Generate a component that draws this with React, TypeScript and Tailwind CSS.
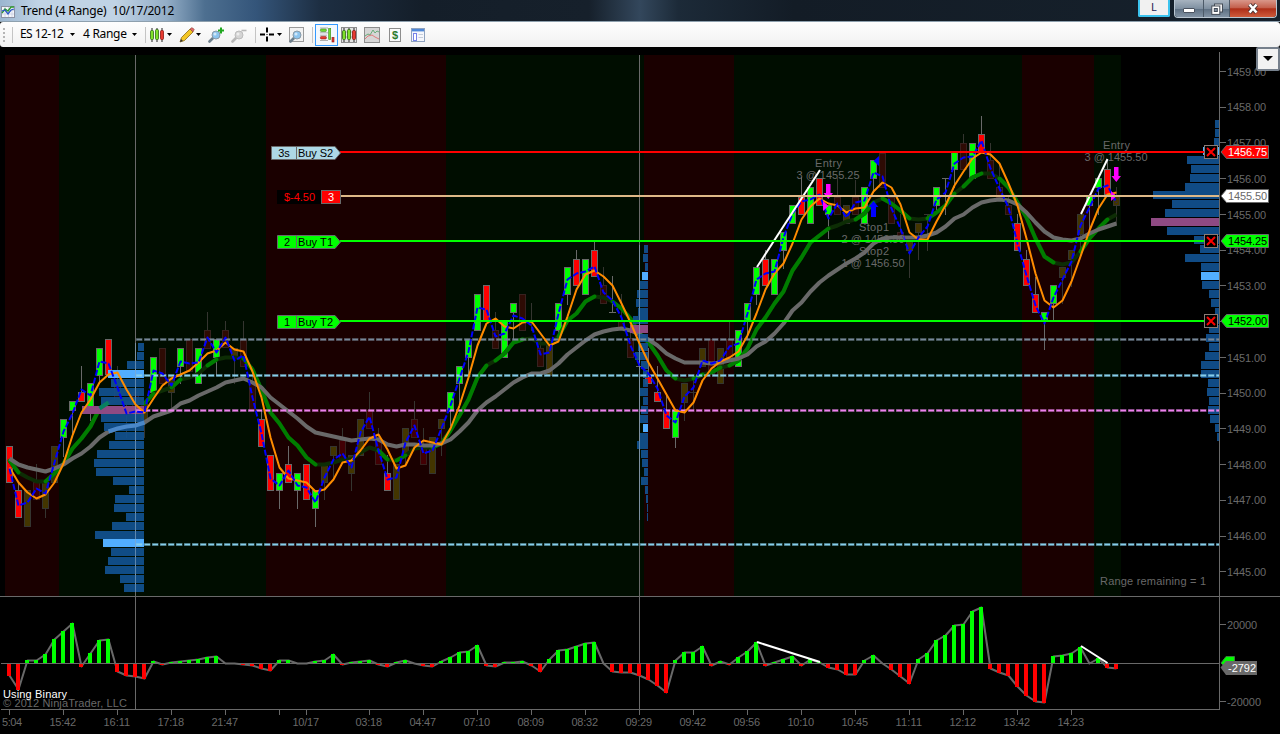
import type { ReactNode } from "react"

type Kind = "g" | "r" | "o" | "m" | "d" | "t" | "b"
// kind, high, top, bottom, low
type Candle = [Kind, number, number, number, number]

const STEP = 9
const barX = (i: number) => 9.5 + i * STEP

const candles: Candle[] = [
  ["r", 446, 446, 482, 482], ["r", 482, 490, 517, 517], ["o", 490, 490, 526, 526], ["m", 464, 482, 499, 499],
  ["o", 482, 482, 508, 517], ["o", 446, 446, 482, 482], ["g", 419, 419, 437, 456], ["g", 401, 401, 410, 433],
  ["r", 366, 392, 401, 401], ["g", 383, 383, 406, 420], ["g", 348, 348, 375, 383], ["r", 339, 339, 374, 374],
  ["m", 366, 383, 401, 401], ["d", 401, 410, 410, 437], ["m", 383, 392, 410, 410], ["o", 402, 402, 419, 437],
  ["g", 357, 357, 392, 392], ["m", 348, 348, 383, 383], ["o", 375, 375, 392, 410], ["g", 348, 348, 366, 383],
  ["m", 339, 339, 371, 371], ["g", 348, 348, 383, 383], ["m", 312, 330, 348, 348], ["g", 339, 339, 357, 375],
  ["m", 321, 330, 347, 347], ["o", 348, 348, 357, 383], ["m", 321, 339, 366, 366], ["m", 366, 381, 410, 410],
  ["r", 410, 419, 446, 446], ["r", 455, 455, 490, 490], ["g", 473, 473, 490, 508], ["r", 446, 464, 482, 482],
  ["g", 473, 473, 490, 508], ["r", 464, 464, 499, 499], ["g", 490, 490, 508, 526], ["o", 464, 464, 482, 499],
  ["o", 446, 446, 455, 480], ["m", 428, 440, 459, 459], ["o", 455, 455, 473, 490], ["o", 419, 419, 455, 455],
  ["m", 392, 410, 428, 428], ["m", 428, 440, 464, 464], ["r", 455, 473, 490, 490], ["o", 464, 464, 499, 499],
  ["o", 428, 428, 455, 464], ["m", 401, 419, 437, 437], ["m", 428, 446, 464, 464], ["o", 437, 437, 473, 473],
  ["o", 419, 419, 428, 455], ["g", 392, 392, 410, 433], ["g", 366, 366, 383, 407], ["g", 339, 339, 357, 375],
  ["g", 294, 294, 330, 330], ["r", 285, 285, 320, 320], ["m", 312, 330, 348, 348], ["g", 320, 320, 357, 357],
  ["g", 303, 303, 312, 338], ["m", 294, 294, 330, 330], ["d", 303, 321, 321, 330], ["m", 339, 348, 366, 366],
  ["o", 340, 340, 375, 375], ["g", 303, 303, 330, 340], ["g", 267, 267, 294, 304], ["r", 250, 259, 285, 285],
  ["g", 259, 259, 294, 294], ["r", 242, 250, 276, 276], ["m", 267, 285, 303, 303], ["b", 276, 312, 312, 312],
  ["m", 294, 320, 328, 328], ["m", 330, 338, 357, 357], ["b", 348, 366, 366, 366], ["r", 348, 376, 383, 383],
  ["r", 366, 392, 401, 401], ["r", 393, 410, 428, 428], ["g", 410, 410, 437, 447], ["o", 383, 383, 402, 420],
  ["d", 375, 392, 392, 410], ["o", 348, 348, 366, 366], ["m", 339, 339, 374, 374], ["o", 348, 348, 383, 383],
  ["m", 322, 339, 358, 358], ["g", 330, 330, 366, 366], ["g", 303, 303, 320, 339], ["g", 267, 267, 294, 304],
  ["r", 250, 259, 285, 285], ["g", 259, 259, 294, 294], ["g", 232, 232, 250, 268], ["g", 205, 205, 223, 223],
  ["r", 177, 197, 214, 214], ["g", 187, 187, 223, 223], ["r", 178, 178, 205, 205], ["g", 205, 205, 214, 238],
  ["m", 178, 197, 214, 214], ["o", 205, 205, 223, 223], ["m", 180, 197, 214, 214], ["g", 187, 187, 223, 223],
  ["g", 160, 160, 178, 191], ["m", 153, 153, 187, 187], ["m", 197, 197, 223, 223], ["m", 214, 232, 240, 240],
  ["o", 240, 240, 250, 277], ["o", 223, 223, 232, 259], ["d", 214, 214, 214, 250], ["g", 187, 187, 205, 214],
  ["t", 178, 178, 178, 214], ["g", 152, 152, 169, 187], ["m", 134, 143, 169, 169], ["g", 143, 143, 178, 178],
  ["r", 116, 134, 152, 152], ["m", 143, 160, 178, 178], ["m", 165, 187, 197, 197], ["m", 196, 205, 214, 214],
  ["r", 214, 223, 250, 250], ["r", 250, 259, 285, 285], ["r", 277, 294, 312, 312], ["g", 312, 312, 320, 349],
  ["g", 285, 285, 303, 320], ["o", 267, 267, 277, 303], ["o", 250, 250, 259, 286], ["o", 214, 214, 234, 250],
  ["g", 196, 196, 205, 230], ["g", 178, 178, 187, 214], ["r", 160, 169, 194, 194], ["o", 187, 196, 205, 223],
]

const fastLine = [
  467, 482, 492, 498, 494, 482, 463, 435, 412, 399, 382, 374, 372, 389, 404, 412, 398, 385, 378, 374, 370, 362, 353,
  350, 342, 349, 351, 371, 397, 437, 467, 478, 480, 482, 491, 489, 479, 462, 460, 450, 438, 434, 449, 468, 465, 447,
  440, 442, 444, 428, 405, 377, 345, 323, 318, 326, 328, 322, 321, 333, 345, 341, 316, 289, 274, 270, 276, 285, 303,
  322, 343, 362, 378, 394, 410, 412, 402, 380, 368, 361, 357, 351, 335, 313, 289, 273, 263, 243, 219, 206, 198, 203,
  205, 212, 208, 207, 191, 182, 187, 204, 232, 239, 239, 221, 205, 185, 171, 158, 152, 154, 163, 183, 205, 238, 273,
  300, 307, 300, 281, 256, 230, 208, 194, 192,
]

const priceLine = [
  468, 505, 502, 488, 493, 462, 431, 413, 389, 395, 361, 363, 387, 413, 411, 412, 370, 373, 385, 361, 363, 362, 337,
  352, 337, 360, 355, 397, 433, 478, 485, 470, 485, 487, 502, 477, 459, 453, 467, 432, 416, 450, 479, 477, 442, 425,
  453, 450, 428, 405, 378, 351, 307, 309, 336, 333, 315, 318, 325, 354, 352, 313, 279, 273, 271, 266, 292, 300, 317,
  345, 365, 373, 388, 415, 422, 396, 387, 360, 363, 360, 346, 343, 313, 279, 273, 271, 237, 213, 201, 199, 194, 218,
  203, 217, 202, 200, 172, 176, 208, 228, 253, 237, 226, 199, 192, 163, 157, 156, 140, 168, 188, 207, 243, 275, 305,
  323, 297, 279, 261, 225, 207, 188, 185, 202,
]

const trendLine = [
  460, 472, 477, 481, 481, 473, 463, 448, 438, 426, 408, 402, 400, 402, 403, 403, 393, 390, 387, 379, 377, 373, 365,
  359, 357, 357, 358, 369, 389, 412, 423, 437, 445, 457, 464, 464, 462, 459, 459, 452, 447, 450, 459, 460, 455, 448,
  447, 447, 443, 430, 415, 399, 377, 365, 360, 353, 342, 339, 338, 343, 343, 336, 320, 313, 301, 296, 297, 301, 308,
  318, 333, 342, 355, 370, 378, 380, 378, 374, 372, 367, 365, 360, 348, 329, 317, 303, 291, 270, 257, 242, 235, 228,
  225, 221, 219, 213, 202, 198, 203, 210, 218, 219, 218, 212, 205, 193, 186, 177, 173, 173, 178, 187, 202, 217, 238,
  256, 262, 264, 262, 251, 238, 228, 219, 214,
]

const trendBright: [number, number][] = [
  [0, 1], [4, 11], [15, 16], [18, 19], [22, 23], [26, 34], [41, 42], [43, 44], [47, 53], [54, 57], [61, 65], [67, 74],
  [76, 77], [78, 79], [80, 91], [94, 96], [97, 100], [102, 105], [106, 108], [110, 116], [119, 122],
]

const slowLine = [
  458, 464, 467, 469, 471, 468, 464, 458, 453, 446, 437, 431, 428, 426, 425, 422, 416, 413, 410, 403, 400, 395, 391,
  387, 382, 380, 378, 382, 387, 397, 404, 411, 418, 426, 432, 434, 436, 438, 440, 439, 438, 439, 444, 446, 444, 444,
  445, 445, 443, 439, 431, 422, 410, 402, 396, 389, 382, 377, 373, 373, 370, 363, 354, 347, 340, 334, 331, 329, 328,
  330, 334, 339, 345, 353, 358, 362, 362, 362, 363, 362, 360, 358, 354, 346, 341, 333, 323, 310, 302, 291, 282, 275,
  269, 263, 258, 252, 243, 238, 237, 237, 237, 237, 235, 232, 226, 218, 214, 207, 202, 200, 199, 200, 204, 212, 222,
  231, 237, 239, 240, 238, 233, 229, 226, 223,
]

const deltas = [
  -12, -26, 3, 3, 9, 24, 32, 40, -3, 10, 23, 24, -8, -12, -13, -15, 2, -1, 1, 2, 3, 4, 6, 7, 0, 0, -1, -2, -5, -7, 3,
  3, 0, 0, 2, 3, 9, -1, 1, 2, 3, -1, -3, 1, 3, 0, -2, -3, 2, 6, 11, 12, 18, -2, -3, 1, 1, 2, -2, -8, 4, 13, 14, 17,
  20, 21, 0, -8, -9, -9, -12, -16, -22, -29, 3, 11, 11, 17, -2, 2, -1, 6, 12, 21, -2, 1, 4, 7, -2, 4, 1, -4, -6, -11,
  -11, 3, 8, 0, -6, -13, -20, 4, 10, 23, 28, 38, 39, 52, 56, -5, -9, -12, -23, -32, -38, -39, 7, 8, 10, 16, 0, 5, -4,
  -5,
]

const bands = [
  { x: 5, w: 54, up: false }, { x: 59, w: 207, up: true }, { x: 266, w: 180, up: false }, { x: 446, w: 198, up: true },
  { x: 644, w: 90, up: false }, { x: 734, w: 288, up: true }, { x: 1022, w: 72, up: false }, { x: 1094, w: 27, up: true },
]

interface ProfileData {
  right: number
  top: number
  lefts: number[]
  poc: number
  bright: number[]
}

const profiles: ProfileData[] = [
  {
    right: 144, top: 343, poc: 7, bright: [3, 22],
    lefts: [138, 137, 127, 108, 111, 99, 101, 82, 101, 104, 115, 109, 97, 94, 96, 113, 129, 115, 114, 126, 112, 95, 103, 111, 108, 105, 120, 124],
  },
  {
    right: 648, top: 245, poc: 9, bright: [3, 20],
    lefts: [644, 643, 645, 642, 640, 637, 636, 638, 633, 630, 638, 638, 635, 641, 643, 643, 640, 643, 641, 640, 643, 640, 637, 641, 642, 644, 641, 645, 646, 647, 647],
  },
  {
    right: 1219, top: 120, poc: 11, bright: [3, 17],
    lefts: [1215, 1215, 1214, 1203, 1187, 1191, 1190, 1185, 1153, 1172, 1165, 1151, 1167, 1194, 1200, 1185, 1201, 1201, 1202, 1209, 1211, 1215, 1212, 1209, 1206, 1209, 1205, 1201, 1201, 1208, 1207, 1209, 1208, 1210, 1215, 1217],
  },
]

const times: [number, string][] = [
  [63, "15:42"], [117, "16:11"], [171, "17:18"], [225, "21:47"], [306, "10/17"], [369, "03:18"], [423, "04:47"],
  [477, "07:10"], [531, "08:09"], [585, "08:32"], [639, "09:29"], [693, "09:42"], [747, "09:56"], [801, "10:10"],
  [855, "10:45"], [909, "11:11"], [963, "12:12"], [1017, "13:42"], [1071, "14:23"],
]

const points = (ys: number[], from = 0, to = ys.length - 1) =>
  ys.slice(from, to + 1).map((y, i) => `${barX(from + i)},${y + 0.5}`).join(" ")

const bandUp = (x: number) => bands.some((b) => b.up && x >= b.x && x < b.x + b.w)

function CandleMark({ i, c }: { i: number; c: Candle }) {
  const [kind, hi, top, bottom, lo] = c
  const x = barX(i)
  const dim = kind === "o" || kind === "m" || kind === "d"
  const wick = dim ? "#353530" : "#696969"
  const fill =
    kind === "g" ? "#00ff00" : kind === "r" ? "#ff0000" : kind === "o" ? "#433500" : bandUp(x) ? "#2e0b04" : "#420004"
  return (
    <g shapeRendering="crispEdges">
      {hi < lo && <line x1={x} x2={x} y1={hi} y2={lo + 1} stroke={wick} />}
      {bottom - top > 2 ? (
        <rect x={x - 3} y={top + 0.5} width={6} height={bottom - top} fill={fill} stroke={kind === "m" ? "#37211f" : wick} />
      ) : (
        <line x1={x - 3.5} x2={x + 3.5} y1={top + 0.5} y2={top + 0.5} stroke={wick} />
      )}
    </g>
  )
}

function Profile({ p }: { p: ProfileData }) {
  return (
    <g shapeRendering="crispEdges">
      {p.lefts.map((l, i) => {
        const color = i === p.poc ? "#8f4a83" : p.bright.includes(i) ? "#52aeff" : "#115190"
        return (
          <rect key={i} x={l} y={Math.round(p.top + i * 8.93)} width={p.right - l} height={8} fill={color} fillOpacity={color === "#115190" ? 0.92 : 1} />
        )
      })}
    </g>
  )
}

function DashedLevel({ y, color }: { y: number; color: string }) {
  return (
    <g strokeDasharray="6.5 1.5">
      <line x1={136} x2={1219} y1={y} y2={y} stroke={color} strokeWidth={3} opacity={0.45} />
      <line x1={136.5} x2={1219} y1={y} y2={y} stroke={color} strokeWidth={1.3} strokeDasharray="5.5 2.5" />
    </g>
  )
}

function OrderTag({ x, y, qty, label, fill }: { x: number; y: number; qty: string; label: string; fill: string }) {
  return (
    <g>
      <path d={`M${x + 0.5} ${y - 5.5}H335L340.5 ${y + 1}L335 ${y + 7.5}H${x + 0.5}Z`} fill={fill} stroke="#696969" />
      <line x1={296.5} x2={296.5} y1={y - 5} y2={y + 7} stroke="#696969" />
      <text x={(x + 297) / 2} y={y + 5} textAnchor="middle" fill="#000">{qty}</text>
      <text x={298} y={y + 5} fill="#000" textLength={35}>{label}</text>
    </g>
  )
}

function PriceTag({ y, fill, color, label }: { y: number; fill: string; color: string; label: string }) {
  return (
    <g>
      <path d={`M1221 ${y}L1226.5 ${y - 6.5}H1268.5V${y + 6.5}H1226.5Z`} fill={fill} stroke="#696969" />
      <text x={1228} y={y + 4} fill={color} textLength={39}>{label}</text>
    </g>
  )
}

function CloseBox({ y }: { y: number }) {
  return (
    <g>
      <rect x={1204.5} y={y - 6.5} width={13} height={13} fill="#000" stroke="#8a7a75" />
      <path d={`M1207 ${y - 4}l8 8M1215 ${y - 4}l-8 8`} stroke="#ff0000" strokeWidth={2} />
    </g>
  )
}

function ArrowDown({ x, y }: { x: number; y: number }) {
  return <path d={`M${x - 2} ${y}h4.5v9h2.5l-4.7 6l-4.8 -6h2.5z`} fill="#ff00ff" />
}

function Chart() {
  return (
    <svg className="block" width={1280} height={687} viewBox="0 47 1280 687" fontFamily="'Liberation Sans', Arial, sans-serif" fontSize={11}>
      <rect x={0} y={47} width={1280} height={687} fill="#000" />
      {bands.map((b) => (
        <rect key={b.x} x={b.x} y={55} width={b.w} height={541} fill={b.up ? "#000d00" : "#1a0000"} />
      ))}

      {/* frame and axes */}
      <g stroke="#696969" shapeRendering="crispEdges">
        <line x1={0} x2={1280} y1={596.5} y2={596.5} />
        <line x1={1} x2={1220} y1={709.5} y2={709.5} />
        <line x1={1219.5} x2={1219.5} y1={52} y2={710} />
        {[9, 279, ...times.map(([x]) => x)].map((x) => (
          <line key={x} x1={x + 0.5} x2={x + 0.5} y1={710} y2={715} />
        ))}
        {Array.from({ length: 15 }, (_, k) => (
          <line key={k} x1={1220} x2={1226} y1={Math.round(71 + k * 35.74) + 0.5} y2={Math.round(71 + k * 35.74) + 0.5} />
        ))}
        <line x1={1220} x2={1226} y1={624.5} y2={624.5} />
        <line x1={1220} x2={1226} y1={701.5} y2={701.5} />
      </g>
      <g fill="#696969">
        <text x={2} y={726} textLength={20}>5:04</text>
        {times.map(([x, t]) => (
          <text key={t} x={x - 13.5} y={726} textLength={26.5}>{t}</text>
        ))}
        {Array.from({ length: 15 }, (_, k) => (
          <text key={k} x={1227} y={Math.round(75.6 + k * 35.74)} textLength={39}>{(1459 - k).toFixed(2)}</text>
        ))}
        <text x={1227} y={629} textLength={30}>20000</text>
        <text x={1227} y={706} textLength={34}>-20000</text>
        <text x={1100} y={585} textLength={106}>Range remaining = 1</text>
      </g>

      {candles.map((c, i) => (
        <CandleMark key={i} i={i} c={c} />
      ))}

      {/* moving averages */}
      <g fill="none" strokeLinejoin="round">
        <polyline points={points(trendLine)} stroke="#0d2d05" strokeWidth={4} />
        {trendBright.map(([a, b]) => (
          <polyline key={a} points={points(trendLine, a, b)} stroke="#007d00" strokeWidth={4} strokeLinecap="round" />
        ))}
        <polyline points={points(slowLine)} stroke="#696969" strokeWidth={4} />
      </g>

      <g stroke="#696969" shapeRendering="crispEdges">
        <line x1={135.5} x2={135.5} y1={55} y2={709} />
        <line x1={639.5} x2={639.5} y1={55} y2={709} />
      </g>
      {profiles.map((p) => (
        <Profile key={p.right} p={p} />
      ))}
      <g stroke="#8aa9c4" opacity={0.6} shapeRendering="crispEdges">
        <line x1={135.5} x2={135.5} y1={343} y2={592} />
        <line x1={639.5} x2={639.5} y1={245} y2={520} />
      </g>
      <polyline points={points(slowLine, 11, 15)} fill="none" stroke="#4a87c8" strokeWidth={4} />
      <polyline points={points(trendLine, 10, 11)} fill="none" stroke="#088060" strokeWidth={4} />

      <DashedLevel y={339.5} color="#778899" />
      <DashedLevel y={375.5} color="#87ceeb" />
      <DashedLevel y={410.5} color="#ee82ee" />
      <DashedLevel y={544.5} color="#87ceeb" />

      <g fill="none" strokeLinejoin="round">
        <polyline points={points(fastLine)} stroke="#ff8c00" strokeWidth={2} />
        <polyline points={points(priceLine)} stroke="#0000ff" strokeWidth={2} strokeDasharray="6 2" />
      </g>

      {/* executions */}
      <g fill="#696969">
        <text x={815} y={167} textLength={27}>Entry</text>
        <text x={796.5} y={179} textLength={63}>3 @ 1455.25</text>
        <text x={859} y={231} textLength={30}>Stop1</text>
        <text x={841.5} y={243} textLength={63}>2 @ 1456.50</text>
        <text x={859} y={255} textLength={30}>Stop2</text>
        <text x={841.5} y={267} textLength={63}>1 @ 1456.50</text>
        <text x={1103} y={149} textLength={27}>Entry</text>
        <text x={1084.5} y={161} textLength={63}>3 @ 1455.50</text>
      </g>
      <g stroke="#fff" strokeWidth={2}>
        <line x1={757} y1={267} x2={820} y2={170} />
        <line x1={1081} y1={214} x2={1107.5} y2={159} />
      </g>
      <ArrowDown x={828} y={184} />
      <ArrowDown x={1116} y={167} />
      <path d="M823 201L828.5 206L823 211Z" fill="#ff00ff" />
      <path d="M1111 191L1116.5 196L1111 201Z" fill="#ff00ff" />
      <path d="M871 217V207H868.5L873.5 201L878.5 207H876V217Z" fill="#0000ff" />
      <path d="M879 156V166L873.5 161Z" fill="#0000ff" />

      {/* working orders */}
      <g strokeWidth={2} shapeRendering="crispEdges">
        <line x1={340} x2={1204} y1={152} y2={152} stroke="#ff0000" />
        <line x1={341} x2={1219} y1={196} y2={196} stroke="#deb887" />
        <line x1={340} x2={1204} y1={241} y2={241} stroke="#00ff00" />
        <line x1={340} x2={1204} y1={321} y2={321} stroke="#00ff00" />
      </g>
      <OrderTag x={271} y={152} qty="3s" label="Buy S2" fill="#add8e6" />
      <OrderTag x={277} y={241} qty="2" label="Buy T1" fill="#00ff00" />
      <OrderTag x={277} y={321} qty="1" label="Buy T2" fill="#00ff00" />
      <rect x={277} y={190} width={44} height={14} fill="#000" />
      <text x={284} y={201} fill="#ff0000" textLength={31}>$-4.50</text>
      <rect x={321.5} y={190.5} width={19} height={13} fill="#ff0000" stroke="#696969" />
      <text x={331} y={201} fill="#fff" textAnchor="middle">3</text>
      <CloseBox y={152} />
      <CloseBox y={241} />
      <CloseBox y={321} />
      <PriceTag y={152} fill="#ff0000" color="#fff" label="1456.75" />
      <PriceTag y={196} fill="#fff" color="#696969" label="1455.50" />
      <PriceTag y={241} fill="#00ff00" color="#000" label="1454.25" />
      <PriceTag y={321} fill="#00ff00" color="#000" label="1452.00" />

      {/* delta panel */}
      <polyline
        points={deltas.map((d, i) => `${barX(i)},${663.5 - d}`).join(" ")}
        fill="none"
        stroke="#696969"
        strokeWidth={2}
        strokeLinejoin="round"
      />
      <g shapeRendering="crispEdges">
        {deltas.map((d, i) =>
          d === 0 ? null : (
            <rect key={i} x={7 + i * STEP} y={d > 0 ? 663 - d : 664} width={4} height={Math.abs(d)} fill={d > 0 ? "#00ff00" : "#ff0000"} />
          ),
        )}
        <line x1={1} x2={1220} y1={663.5} y2={663.5} stroke="#696969" />
      </g>
      <g stroke="#fff" strokeWidth={2}>
        <line x1={757} y1={642} x2={820} y2={662} />
        <line x1={1081} y1={646} x2={1107.5} y2={663} />
      </g>
      <path d="M1221 663L1226 656.5H1234.5V668H1226Z" fill="#00ff00" stroke="#3b7a3b" />
      <path d="M1220.5 667.5L1226 661H1257V675H1226Z" fill="#696969" />
      <text x={1228} y={672} fill="#fff" textLength={28}>-2792</text>
      <text x={3} y={707} fill="#696969" textLength={124}>© 2012 NinjaTrader, LLC</text>
      <text x={3} y={698} fill="#fff" textLength={64}>Using Binary</text>
    </svg>
  )
}

function Icon({ className = "", children }: { className?: string; children: ReactNode }) {
  return (
    <svg width={16} height={16} viewBox="0 0 16 16" className={`shrink-0 ${className}`}>
      {children}
    </svg>
  )
}

function Caret({ className = "" }: { className?: string }) {
  return (
    <svg width={5} height={3} viewBox="0 0 5 3" className={`shrink-0 ${className}`}>
      <path d="M0 0H5L2.5 3Z" fill="#000" />
    </svg>
  )
}

function Separator({ className = "" }: { className?: string }) {
  return <div className={`h-4 w-px shrink-0 bg-[#c4c4c4] ${className}`} />
}

function Candlesticks() {
  return (
    <>
      <path d="M3 1V15M8 1V15M13 1V15" stroke="#222" />
      <rect x={1.5} y={3.5} width={3} height={9} rx={1} fill="#7ee02a" stroke="#2e6b12" strokeWidth={0.8} />
      <rect x={6.5} y={2.5} width={3} height={10} rx={1} fill="#7ee02a" stroke="#2e6b12" strokeWidth={0.8} />
      <rect x={11.5} y={3.5} width={3} height={9} rx={1} fill="#e83a30" stroke="#8c1712" strokeWidth={0.8} />
    </>
  )
}

function Magnifier({ muted = false }: { muted?: boolean }) {
  return (
    <>
      <path d="M5.5 10.5L1.5 14.5" stroke={muted ? "#b8b8b8" : "#6d7f8c"} strokeWidth={2.6} strokeLinecap="round" />
      <circle cx={8} cy={8} r={4} fill={muted ? "#d4d4d4" : "#8cc4ee"} stroke={muted ? "#bcbcbc" : "#8a9aa6"} />
      <circle cx={7} cy={7} r={1.5} fill="#fff" opacity={0.6} />
    </>
  )
}

function TitleBar() {
  return (
    <div className="relative flex h-[22px] shrink-0 items-center border-b border-[#8ea0ae] bg-[linear-gradient(90deg,#9bb6d0_0%,#c0d3e5_3%,#c0d3e5_9%,#94aec7_13%,#4d6f90_16%,#34557a_20%,#1d2e42_25%,#141e29_33%,#16202b_46%,#33475c_50%,#1c2a38_53%,#131c26_62%,#16212c_100%)]">
      <Icon className="ml-px">
        <rect x={0.5} y={3.5} width={13} height={11} fill="#f4f6fa" stroke="#8d93a5" />
        <path d="M4 4V14M7.5 4V14M11 4V14M1 7.5H13M1 11H13" stroke="#c3cbe0" strokeWidth={0.7} />
        <path d="M1 10L4 6L7 8L10 4H13" fill="none" stroke="#2b9a2b" strokeWidth={1.3} />
        <path d="M1 8L4 7L7 11L10 7L13 6" fill="none" stroke="#2b57c4" strokeWidth={1.3} />
      </Icon>
      <span className="ml-1 whitespace-pre font-['Noto_Sans',sans-serif] text-[12px] leading-[20px] tracking-[-0.2px] text-black">
        {"Trend (4 Range)  10/17/2012"}
      </span>
      <div className="ml-auto mr-[3px] flex h-full items-start">
        <div className="mr-1 flex h-[17px] w-8 items-center justify-center rounded-b-[2px] border-2 border-t-0 border-[#3cc3ee] bg-[#f1f1f1] pb-px font-['Noto_Sans',sans-serif] text-[11px] text-[#222255]">
          L
        </div>
        <div className="flex h-[18px] overflow-hidden rounded-b-[4px] border border-t-0 border-[#b9c6d1]">
          <div className="flex w-7 items-center justify-center bg-[linear-gradient(#a7b3bf,#7f90a1_50%,#5d6f82_52%,#8293a4)]">
            <div className="mt-1 h-[5px] w-3 rounded-[1px] border border-[#4b5360] bg-white" />
          </div>
          <div className="flex w-[27px] items-center justify-center border-x border-[#4c5a68] bg-[linear-gradient(#a7b3bf,#7f90a1_50%,#5d6f82_52%,#8293a4)]">
            <svg width={12} height={12} viewBox="0 0 12 12">
              <rect x={3.5} y={1} width={8} height={8} fill="#eee" stroke="#444c57" />
              <rect x={0.8} y={3} width={8} height={8.4} fill="#fff" stroke="#444c57" />
              <rect x={3.3} y={5.5} width={3} height={3} fill="#7f90a1" stroke="#444c57" />
            </svg>
          </div>
          <div className="flex w-[46px] items-center justify-center bg-[linear-gradient(#d9978a,#c4604d_45%,#ae2e18_52%,#cf5b3c)]">
            <svg width={12} height={11} viewBox="0 0 12 11">
              <path d="M2.5 1.5L9.5 9.5M9.5 1.5L2.5 9.5" stroke="#4d3535" strokeWidth={4.2} />
              <path d="M2.5 1.5L9.5 9.5M9.5 1.5L2.5 9.5" stroke="#fff" strokeWidth={2.6} />
            </svg>
          </div>
        </div>
      </div>
    </div>
  )
}

function ToolBar() {
  return (
    <div className="flex h-[25px] shrink-0 items-center rounded-[3px] bg-[linear-gradient(#fefefe,#f1f1f1)] font-['Noto_Sans',sans-serif] text-[12px] text-black">
      <svg width={3} height={14} viewBox="0 0 3 14" className="ml-[3px]">
        <path d="M1 0V14" stroke="#b5b5b5" strokeWidth={2} strokeDasharray="2 2" />
      </svg>
      <Separator className="ml-[6px]" />
      <span className="ml-[7px] w-[50px] whitespace-nowrap pb-px text-[12px] tracking-[-0.55px]">ES 12-12</span>
      <Caret />
      <span className="ml-2 w-[49px] whitespace-nowrap pb-px text-[12px] tracking-[-0.3px]">4 Range</span>
      <Caret />
      <Separator className="ml-2" />
      <Icon className="ml-[3px]">
        <Candlesticks />
      </Icon>
      <Caret className="ml-0.5" />
      <Icon className="ml-[7px]">
        <path d="M1 15L2.5 10.5L11 2L14 5L5.5 13.5Z" fill="#f3c625" stroke="#8a6a1d" strokeWidth={0.8} />
        <path d="M11 2L12.5 0.8Q14 0.6 15.2 2.4L14 5Z" fill="#e0686a" stroke="#8a4a3a" strokeWidth={0.6} />
        <path d="M1 15L2 12L4 14Z" fill="#333" />
      </Icon>
      <Caret className="ml-px" />
      <Icon className="ml-[7px]">
        <Magnifier />
        <path d="M13 0.5V6.5M10 3.5H16" stroke="#1fa71f" strokeWidth={2} />
      </Icon>
      <Icon className="ml-[7px]">
        <Magnifier muted />
        <path d="M10.5 3.5H15.5" stroke="#b8b8b8" strokeWidth={1.6} />
      </Icon>
      <Separator className="ml-2" />
      <Icon className="ml-1">
        <path d="M7 0.5V5.5M7 9.5V14.5M0 7.5H5M9 7.5H14" stroke="#000" strokeWidth={2} />
        <path d="M6.5 7.5H7.5" stroke="#000" />
      </Icon>
      <Caret className="ml-px" />
      <Icon className="ml-[7px]">
        <rect x={0.5} y={0.5} width={14} height={14} fill="#f2f2f2" stroke="#9a9a9a" />
        <Magnifier />
      </Icon>
      <Separator className="ml-[7px]" />
      <div className="ml-0.5 flex h-[22px] w-[23px] items-center justify-center border border-[#3399ff] bg-[#f3f8fd]">
        <Icon>
          <path d="M1 1H9M1 5.8H9M1 8.2H8M1 13.5H9" stroke="#9a9a9a" strokeWidth={0.8} />
          <rect x={1.4} y={2} width={6} height={2.6} rx={1} fill="#6fdc35" stroke="#3d8a18" strokeWidth={0.6} />
          <rect x={1.4} y={9.4} width={6} height={2.6} rx={1} fill="#e83a30" stroke="#8c1712" strokeWidth={0.6} />
          <rect x={9.7} y={1.5} width={2} height={11} fill="#6fdc35" stroke="#3d8a18" strokeWidth={0.6} />
          <rect x={13} y={10.5} width={2} height={4.5} fill="#e83a30" stroke="#8c1712" strokeWidth={0.6} />
        </Icon>
      </div>
      <Icon className="ml-[3px]">
        <rect x={0.5} y={0.5} width={15} height={15} fill="#e4e4e4" stroke="#8d8d8d" />
        <path d="M1 5H15M1 10H15" stroke="#aaa" />
        <Candlesticks />
      </Icon>
      <Icon className="ml-[7px]">
        <rect x={0.5} y={0.5} width={15} height={15} fill="#d6d6d6" stroke="#8d8d8d" />
        <path d="M1 9L4 7L6 8L9 3L11 6L13 4L15 5" fill="none" stroke="#69ad7a" />
        <path d="M1 12L4 9L8 8L11 10L15 12" fill="none" stroke="#df7d7d" />
      </Icon>
      <Icon className="ml-[7px]">
        <rect x={2.5} y={1.5} width={11} height={13} fill="#fbfbfb" stroke="#8d8d8d" />
        <text x={8} y={12} textAnchor="middle" fontSize={11} fontWeight="bold" fill="#2b7a2b" fontFamily="'Liberation Sans', sans-serif">$</text>
      </Icon>
      <Icon className="ml-[7px]">
        <rect x={1.5} y={1.5} width={13} height={13} fill="#f5f7fc" stroke="#8fa3bf" />
        <rect x={2} y={2} width={12} height={2.4} fill="#4f88d8" />
        <rect x={3.5} y={6.5} width={3} height={7} fill="#fff" stroke="#7583e8" />
        <path d="M8.5 7.5H13M8.5 10.5H13" stroke="#c6cedb" />
      </Icon>
    </div>
  )
}

export default function App() {
  return (
    <div className="relative flex h-[734px] w-[1280px] flex-col overflow-hidden bg-black">
      <TitleBar />
      <ToolBar />
      <Chart />
      <button className="absolute right-0 top-[47px] flex h-6 w-6 items-center justify-center rounded-[2px] border-2 border-[#76808c] bg-[#f2f2f2] pb-0.5">
        <svg width={10} height={5} viewBox="0 0 10 5">
          <path d="M0 0H10L5 5Z" fill="#000" />
        </svg>
      </button>
    </div>
  )
}
